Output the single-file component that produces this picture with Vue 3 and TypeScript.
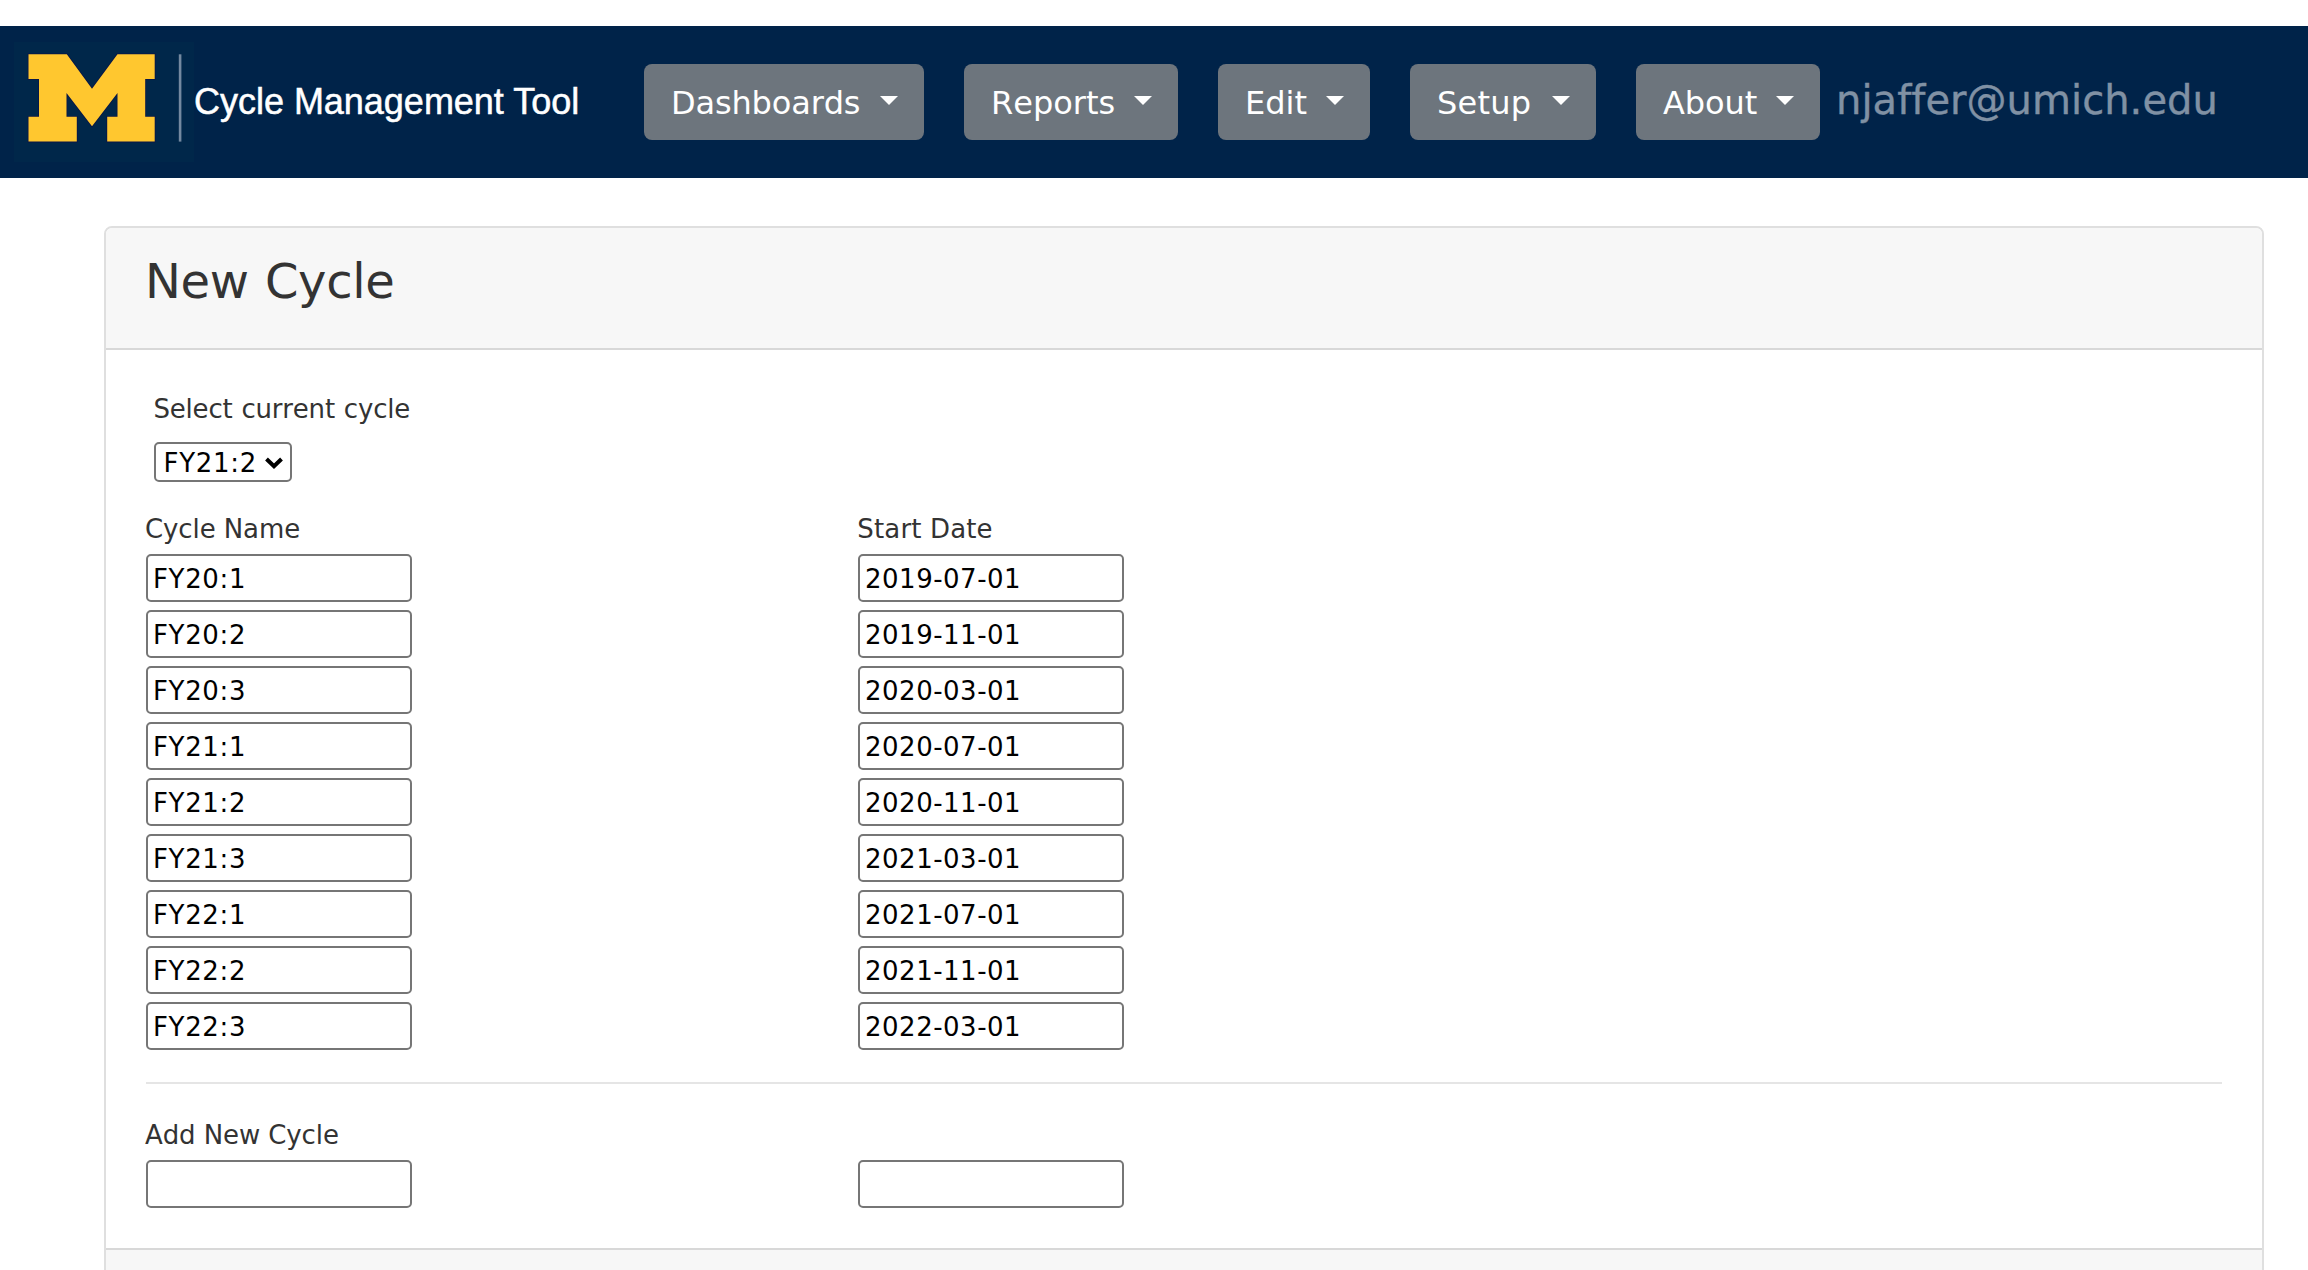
<script setup lang="ts">
import { ref } from 'vue'

interface MenuItem {
  label: string
  width: number
  spacing: number
}

interface Cycle {
  name: string
  start: string
}

const menus: MenuItem[] = [
  { label: 'Dashboards', width: 280, spacing: -0.15 },
  { label: 'Reports', width: 214, spacing: 0 },
  { label: 'Edit', width: 152, spacing: 0 },
  { label: 'Setup', width: 186, spacing: 0.2 },
  { label: 'About', width: 184, spacing: -0.1 },
]

const cycles = ref<Cycle[]>([
  { name: 'FY20:1', start: '2019-07-01' },
  { name: 'FY20:2', start: '2019-11-01' },
  { name: 'FY20:3', start: '2020-03-01' },
  { name: 'FY21:1', start: '2020-07-01' },
  { name: 'FY21:2', start: '2020-11-01' },
  { name: 'FY21:3', start: '2021-03-01' },
  { name: 'FY22:1', start: '2021-07-01' },
  { name: 'FY22:2', start: '2021-11-01' },
  { name: 'FY22:3', start: '2022-03-01' },
])

const current = ref('FY21:2')
const newName = ref('')
const newStart = ref('')
</script>

<template>
  <div class="page">
    <nav class="navbar">
      <svg class="logo" width="180" height="120" viewBox="14 42 180 120">
        <rect x="14" y="42" width="180" height="120" fill="#00274a" />
        <path
          fill="#ffc72f"
          stroke="#0b1446"
          stroke-width="1.6"
          paint-order="stroke"
          d="M28.5 54.3H66.8L92 88.7L117.5 54.3H154.7V79H145.2V116.8H154.7V141.6H107.2V116.8H117.5V93L92 126.2L66.5 93V116.8H76.8V141.6H28.5V116.8H39V79H28.5Z"
        />
        <rect x="178.8" y="54.3" width="2.6" height="87.3" fill="#7489a0" />
      </svg>
      <a class="brand">Cycle Management Tool</a>
      <div class="menus">
        <button
          v-for="m in menus"
          :key="m.label"
          class="menu"
          type="button"
          :style="{ width: m.width + 'px', letterSpacing: m.spacing + 'px' }"
        >
          <span>{{ m.label }}</span>
          <span class="caret"></span>
        </button>
      </div>
      <span class="user">njaffer@umich.edu</span>
    </nav>

    <main class="card">
      <header class="card-header">
        <h4>New Cycle</h4>
      </header>
      <section class="card-body">
        <div class="current">
          <label class="label" for="current">Select current cycle</label>
          <div class="select-wrap">
            <select id="current" v-model="current">
              <option v-for="c in cycles" :key="c.name">{{ c.name }}</option>
            </select>
            <svg class="chevron" width="20" height="14" viewBox="0 0 20 14">
              <path d="M2.5 3L10 10.2L17.5 3" fill="none" stroke="#000" stroke-width="4" />
            </svg>
          </div>
        </div>

        <div class="columns list">
          <div class="column">
            <span class="label">Cycle Name</span>
            <input v-for="c in cycles" :key="c.name" v-model="c.name" class="name" type="text" />
          </div>
          <div class="column start">
            <span class="label">Start Date</span>
            <input v-for="c in cycles" :key="c.name" v-model="c.start" class="date" type="text" />
          </div>
        </div>

        <hr />

        <div class="columns">
          <div class="column">
            <span class="label">Add New Cycle</span>
            <input v-model="newName" class="name" type="text" />
          </div>
          <div class="column start">
            <span class="label"></span>
            <input v-model="newStart" class="date" type="text" />
          </div>
        </div>
      </section>
      <footer class="card-footer"></footer>
    </main>
  </div>
</template>

<style>
body {
  margin: 0;
  background: #fff;
}
</style>

<style scoped>
* {
  box-sizing: border-box;
}

.page {
  height: 1270px;
  padding-top: 26px;
  overflow: hidden;
  background: #fff;
  color: #333;
  font: 26px/40px Verdana, 'DejaVu Sans', sans-serif;
  font-kerning: none;
  font-variant-ligatures: none;
}

.navbar {
  display: flex;
  align-items: center;
  height: 152px;
  padding-left: 14px;
  background: #002349;
}

.logo {
  flex: none;
  align-self: flex-start;
  margin-top: 16px;
}

.brand {
  flex: none;
  width: 450px;
  padding-bottom: 1px;
  color: #fff;
  font: 36px/41px 'Liberation Sans', Arial, sans-serif;
  font-kerning: normal;
  letter-spacing: -0.02px;
  white-space: nowrap;
  -webkit-text-stroke: 0.5px #fff;
}

.menus {
  display: flex;
  gap: 40px;
}

.menu {
  display: flex;
  align-items: center;
  justify-content: space-between;
  height: 76px;
  padding: 2px 26px 0 27px;
  border: 0;
  border-radius: 8px;
  background: #6d757d;
  color: #fff;
  font: 32px/38px Verdana, 'DejaVu Sans', sans-serif;
  font-kerning: none;
}

.caret {
  width: 0;
  height: 0;
  margin-bottom: 5px;
  border: 9.6px solid transparent;
  border-top-color: #fff;
  border-bottom: 0;
}

.user {
  padding: 0 0 4px 16px;
  color: #8091a4;
  font-size: 40px;
  line-height: 46px;
  letter-spacing: 0.05px;
  -webkit-text-stroke: 0.4px #8091a4;
}

.card {
  margin: 48px 44px 0 104px;
  border: 2px solid #dfdfdf;
  border-radius: 8px;
  overflow: hidden;
}

.card-header {
  height: 122px;
  padding: 25px 40px 0 39px;
  border-bottom: 2px solid #d8d8d8;
  background: #f7f7f7;
}

h4 {
  margin: 0;
  font-size: 48px;
  font-weight: 400;
  line-height: 56px;
  letter-spacing: -0.35px;
  word-spacing: 1.4px;
}

.card-body {
  padding: 39px 40px 40px;
}

.label {
  display: block;
  height: 40px;
  margin: 0 0 5px -1px;
  letter-spacing: -0.1px;
  white-space: nowrap;
}

.current {
  padding-left: 8px;
}

.current .label {
  margin: 0 0 13px -0.5px;
  letter-spacing: -0.2px;
  word-spacing: 0.9px;
}

.select-wrap {
  position: relative;
  width: 138px;
  height: 40px;
}

select {
  display: block;
  width: 138px;
  height: 40px;
  margin: 0;
  padding: 1px 0 0 7.5px;
  appearance: none;
  border: 2px solid #767676;
  border-radius: 5px;
  background: #fff;
  color: #000;
  font: 26px/30px Verdana, 'DejaVu Sans', sans-serif;
  font-kerning: none;
  letter-spacing: 0.7px;
}

.chevron {
  position: absolute;
  top: 14px;
  right: 8px;
}

.columns {
  display: flex;
}

.list {
  margin-top: 27px;
}

.column {
  width: 712px;
}

.start .label {
  margin-left: -0.7px;
  letter-spacing: 0.15px;
}

input {
  display: block;
  width: 266px;
  height: 48px;
  margin: 0 0 8px;
  padding: 2px 4px 0 5px;
  border: 2px solid #767676;
  border-radius: 5px;
  background: #fff;
  color: #000;
  font: 26px/30px Verdana, 'DejaVu Sans', sans-serif;
  font-kerning: none;
}

input:last-child {
  margin-bottom: 0;
}

.name {
  letter-spacing: 0.65px;
}

.date {
  letter-spacing: 0.5px;
}

hr {
  height: 2px;
  margin: 32px 0 31px;
  border: 0;
  background: #e5e5e5;
}

.card-footer {
  height: 120px;
  border-top: 2px solid #d8d8d8;
  background: #f7f7f7;
}
</style>
